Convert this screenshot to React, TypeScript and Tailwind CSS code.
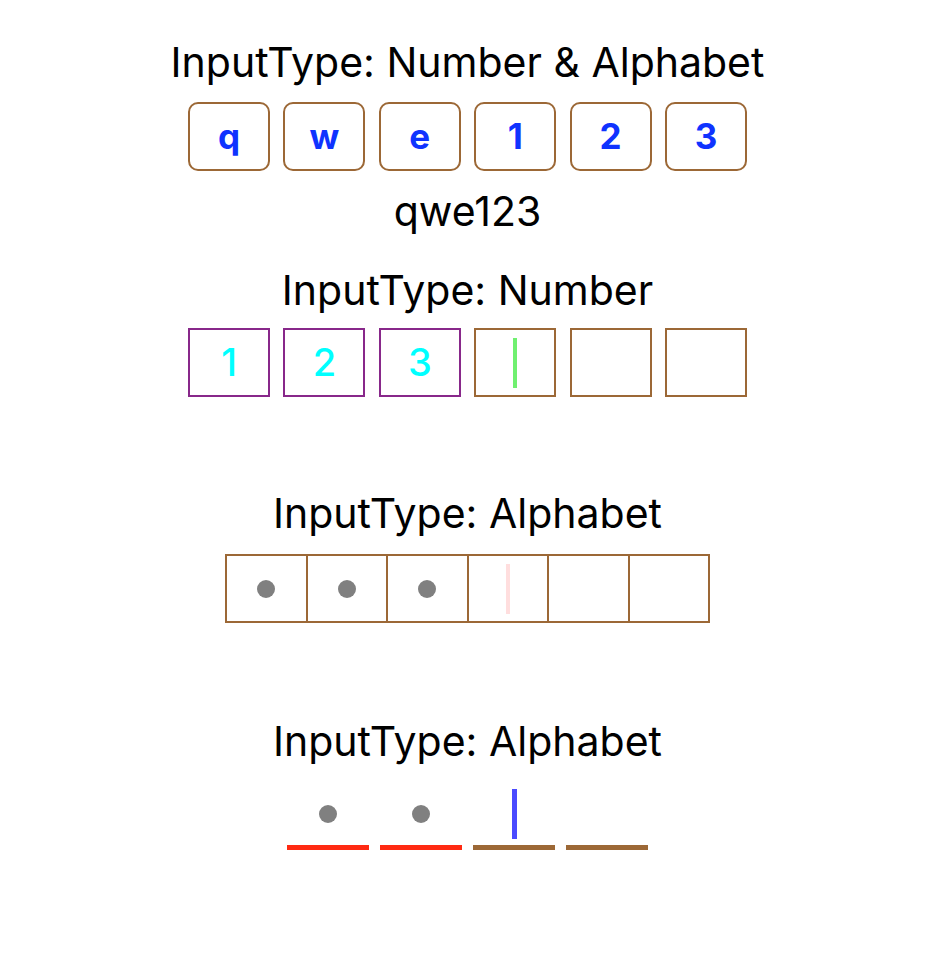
import React from 'react';

const font = { fontFamily: 'Inter, "Noto Sans", sans-serif' };

function Title({ children, className }: { children: React.ReactNode; className?: string }) {
	return (
		<div className={`text-[41px] leading-[48px] text-black ${className ?? ''}`}>{children}</div>
	);
}

function Dot() {
	return <div className="h-[18px] w-[18px] rounded-full bg-[#808080]" />;
}

export default function App() {
	const first = ['q', 'w', 'e', '1', '2', '3'];
	const numbers = ['1', '2', '3', '', '', ''];

	return (
		<div
			className="flex min-h-[968px] w-full flex-col items-center bg-white pt-[38px] pr-[3px]"
			style={font}
		>
			<Title>InputType: Number &amp; Alphabet</Title>
			<div className="mt-[16px] flex gap-[13.4px]">
				{first.map((c, i) => (
					<div
						key={i}
						className="flex h-[69px] w-[82px] items-center justify-center rounded-[10px] border-2 border-[#9c6836] text-[35px] font-bold text-[#0f33ff]"
					>
						{c}
					</div>
				))}
			</div>
			<div className="mt-[18px] text-[41px] leading-[44px] text-black">qwe123</div>

			<Title className="mt-[33px]">InputType: Number</Title>
			<div className="mt-[14px] flex gap-[13.4px]">
				{numbers.map((c, i) => (
					<div
						key={i}
						className={`flex h-[69px] w-[82px] items-center justify-center border-2 text-[38px] font-medium text-[#00ffff] ${
							c ? 'border-[#88288a]' : 'border-[#9c6836]'
						}`}
					>
						{c}
						{i === 3 && <div className="h-[50px] w-[4px] bg-[#70f070]" />}
					</div>
				))}
			</div>

			<Title className="mt-[92px]">InputType: Alphabet</Title>
			<div className="mt-[17px] flex border-y-2 border-l-2 border-[#9c6836]">
				{[0, 1, 2, 3, 4, 5].map((i) => (
					<div
						key={i}
						className="flex h-[65px] w-[80.5px] items-center justify-center border-r-2 border-[#9c6836]"
					>
						{i < 3 && <Dot />}
						{i === 3 && <div className="h-[50px] w-[4px] bg-[#ffdede]" />}
					</div>
				))}
			</div>

			<Title className="mt-[94px]">InputType: Alphabet</Title>
			<div className="mt-[15px] flex gap-[10.5px]">
				{[0, 1, 2, 3].map((i) => (
					<div
						key={i}
						className={`flex h-[70px] w-[82.5px] items-center justify-center border-b-[5px] pt-[3px] ${
							i < 2 ? 'border-[#ff2a12]' : 'border-[#9c6836]'
						}`}
					>
						{i < 2 && <Dot />}
						{i === 2 && <div className="h-[50px] w-[5px] bg-[#4a4aff]" />}
					</div>
				))}
			</div>
		</div>
	);
}
